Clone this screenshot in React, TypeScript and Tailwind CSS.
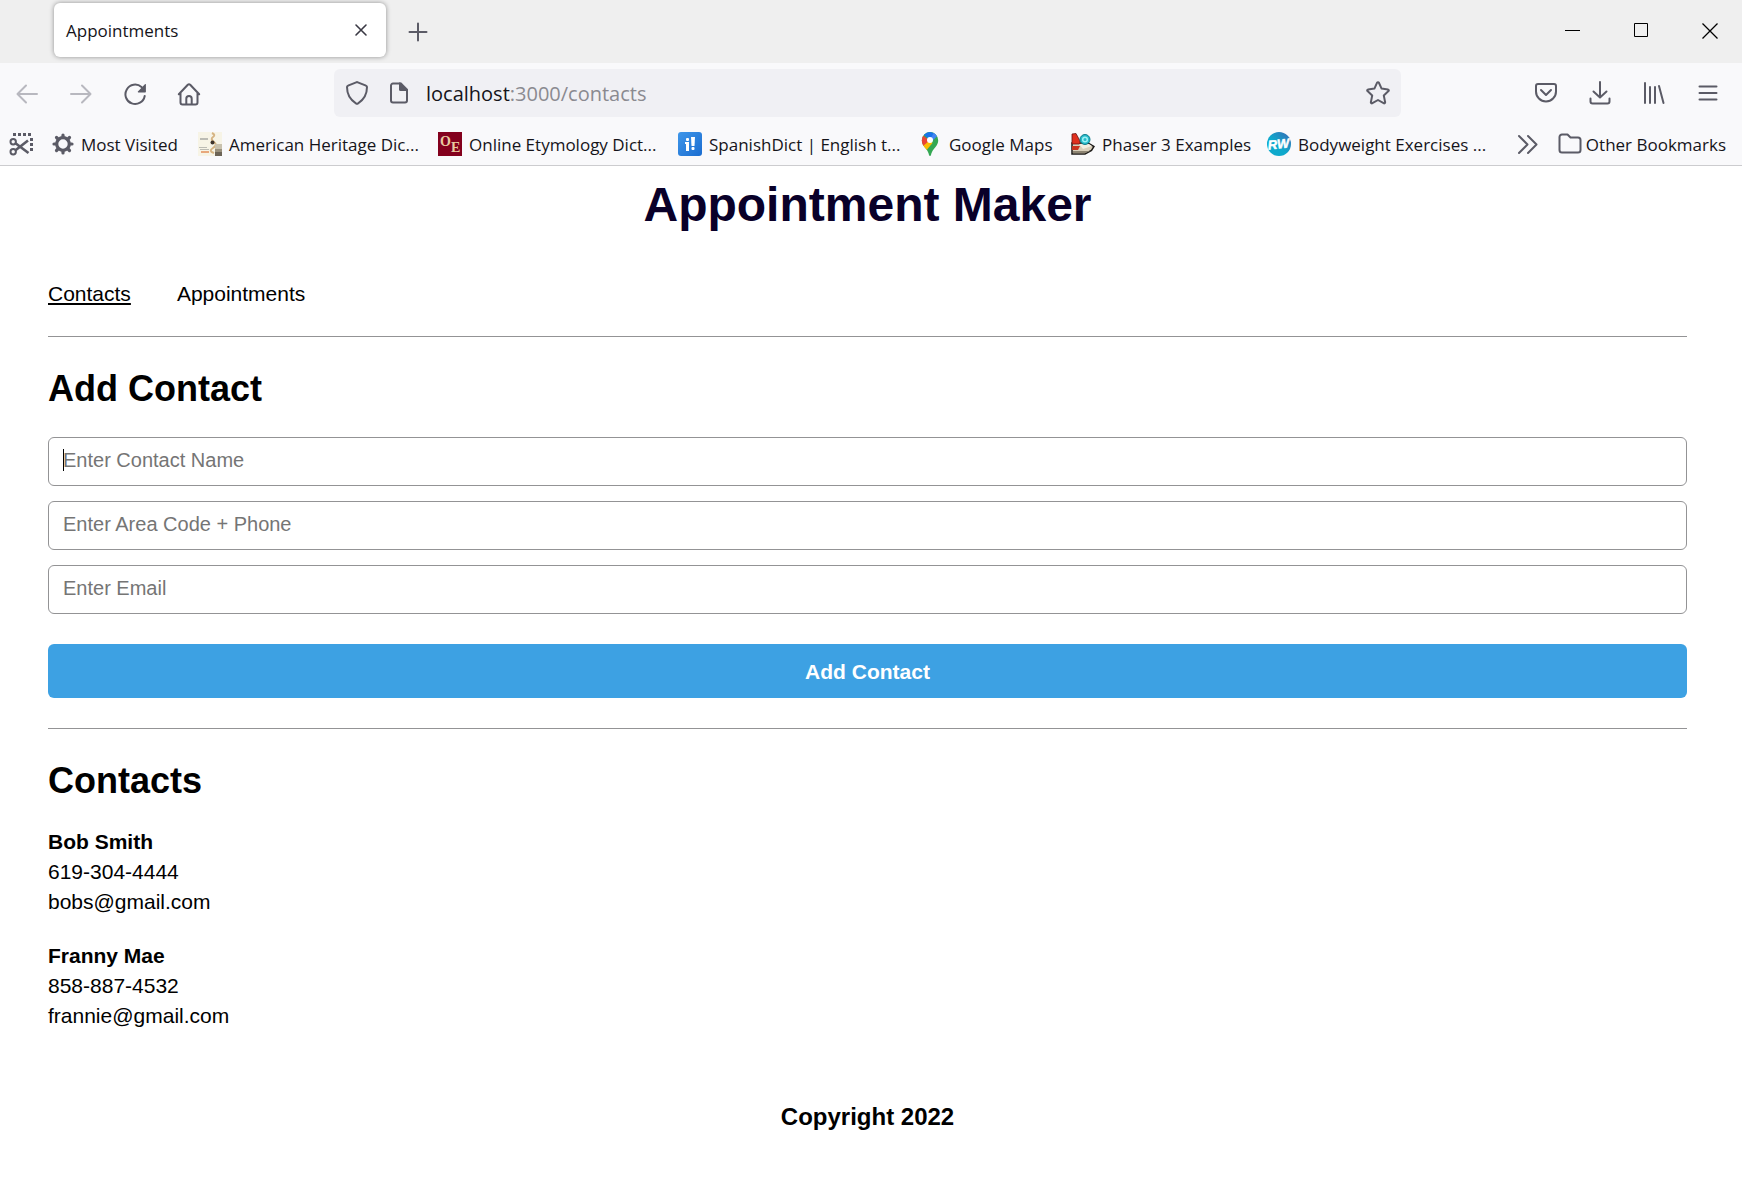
import React, { useState } from 'react';

type P = { className?: string };

const line = {
  fill: 'none',
  stroke: 'currentColor',
  strokeWidth: 2,
  strokeLinecap: 'round' as const,
  strokeLinejoin: 'round' as const,
};

const Svg = ({ size = 24, className = '', children }: P & { size?: number; children: React.ReactNode }) => (
  <svg width={size} height={size} viewBox={`0 0 ${size} ${size}`} className={`shrink-0 ${className}`} aria-hidden="true">
    {children}
  </svg>
);

const BackIcon = () => (
  <Svg><path {...line} d="M22 12H3M11 3.500L2.500 12l8.500 8.500" /></Svg>
);
const ForwardIcon = () => (
  <Svg><path {...line} d="M2 12h19M13 3.500l8.500 8.500-8.500 8.500" /></Svg>
);
const ReloadIcon = () => (
  <Svg>
    <path {...line} strokeWidth={2} d="M18.500 5A9.700 9.700 0 1 0 21.700 14" />
    <path fill="currentColor" d="M21.900 2.200a.6.6 0 0 1 1 .5v7a.8.8 0 0 1-.8.800h-6.800a.6.6 0 0 1-.4-1z" />
  </Svg>
);
const HomeIcon = () => (
  <Svg>
    <path {...line} d="M1.800 12.300L10.800 2.800a1.700 1.700 0 0 1 2.400 0L22.200 12.300M3.500 11v9.500a2 2 0 0 0 2 2h13a2 2 0 0 0 2-2V11" />
    <path {...line} d="M9.300 22v-5.300a2.700 2.700 0 0 1 5.400 0V22" />
  </Svg>
);
const ShieldIcon = () => (
  <Svg><path {...line} d="M11.200 1.300a2 2 0 0 1 1.600 0L21 4.700a1.500 1.500 0 0 1 1 1.400c0 7-2.800 12.500-8.900 16.200a2 2 0 0 1-2.200 0C4.800 18.600 2 13.100 2 6.100a1.500 1.500 0 0 1 1-1.400z" /></Svg>
);
const PageIcon = () => (
  <Svg>
    <path {...line} d="M13 2.500H6a2 2 0 0 0-2 2v15a2 2 0 0 0 2 2h12a2 2 0 0 0 2-2V9" />
    <path fill="currentColor" d="M12 1.500h2.300L21 8.200V10h-7.500A1.500 1.500 0 0 1 12 8.500z" />
  </Svg>
);
const StarIcon = () => (
  <Svg><path {...line} d="M11.100 1.700a1 1 0 0 1 1.800 0l2.700 5.900 6.300.8a1 1 0 0 1 .6 1.700l-4.700 4.400 1.300 6.600a1 1 0 0 1-1.500 1.100L12 19l-5.600 3.200a1 1 0 0 1-1.500-1.100l1.300-6.600-4.700-4.400a1 1 0 0 1 .6-1.700l6.300-.8z" /></Svg>
);
const PocketIcon = () => (
  <Svg>
    <path {...line} d="M4 3h16a2 2 0 0 1 2 2v5.500a10 10 0 0 1-20 0V5a2 2 0 0 1 2-2z" />
    <path {...line} d="M7 9l5 5 5-5" />
  </Svg>
);
const DownloadIcon = () => (
  <Svg><path {...line} d="M12 1v15M5.500 10.500L12 16.500l6.500-6M2.500 17.500v3a2 2 0 0 0 2 2h15a2 2 0 0 0 2-2v-3" /></Svg>
);
const LibraryIcon = () => (
  <Svg><path {...line} d="M3 2v20M8 6v16M13 6v16M17 5l4.500 17" /></Svg>
);
const MenuIcon = () => (
  <Svg><path {...line} d="M3.500 5.500h17M3.500 12h17M3.500 18.500h17" /></Svg>
);

const SnipIcon = () => (
  <Svg>
    <path fill="none" stroke="currentColor" strokeWidth={3} strokeDasharray="3 2" d="M4 2.500h20M22.500 6v15" />
    <circle cx="4.200" cy="9.800" r="2.700" fill="none" stroke="currentColor" strokeWidth={2} />
    <circle cx="4.200" cy="19.800" r="2.700" fill="none" stroke="currentColor" strokeWidth={2} />
    <path fill="none" stroke="currentColor" strokeWidth={2.600} d="M6.500 11.200L19.500 21M6.500 18.300L19 8.500" />
  </Svg>
);
const GearIcon = () => (
  <Svg size={22}>
    <circle cx="11" cy="11" r="6.300" fill="none" stroke="currentColor" strokeWidth={3.200} />
    <path
      fill="none"
      stroke="currentColor"
      strokeWidth={3.200}
      strokeLinecap="round"
      d="M11 4V2M11 20v-2M4 11H2M20 11h-2M6 6L4.500 4.500M17.500 17.500L16 16M6 16l-1.500 1.500M17.500 4.500L16 6"
    />
  </Svg>
);
const HeritageIcon = () => (
  <Svg>
    <rect width="24" height="24" fill="#f7f4e6" />
    <path fill="#bcbcb4" d="M2 6h8v2H2zM1 15h8v1H1zM2 17h9v1H2z" />
    <path fill="#e8a87c" d="M3 19h8v2H3z" />
    <path fill="none" stroke="#d6b483" strokeWidth={2} d="M14 1q4 2 1 4t1 5-1 6 1 5" />
    <circle cx="14.500" cy="10.500" r="2" fill="#3d342c" />
    <rect x="17" y="12" width="7" height="5" fill="#c9c2ae" />
    <rect x="17" y="17" width="7" height="3" fill="#9a917d" />
    <rect x="17" y="20" width="7" height="4" fill="#6c6456" />
  </Svg>
);
const EtymologyIcon = () => (
  <Svg>
    <rect width="24" height="24" fill="#83001d" />
    <text x="2" y="14" fontSize="14" fontWeight="bold" fill="#e9c9a0" fontFamily="Liberation Serif, serif">
      O<tspan dy="6">E</tspan>
    </text>
  </Svg>
);
const SpanishIcon = () => (
  <Svg>
    <defs>
      <linearGradient id="sd" x1="0" y1="0" x2="1" y2="1">
        <stop offset="0" stopColor="#3f97ea" />
        <stop offset="1" stopColor="#1a6cd0" />
      </linearGradient>
    </defs>
    <rect width="24" height="24" rx="3" fill="url(#sd)" />
    <g fill="#fff">
      <rect x="8" y="6" width="3" height="3" rx="1" />
      <path d="M7 10h4v9H8v-7H7z" />
      <path d="M13 5h4l-.5 9h-3z" />
      <rect x="13.500" y="15" width="3" height="3" rx="1" />
    </g>
  </Svg>
);
const MapsIcon = () => (
  <Svg>
    <clipPath id="pin"><path d="M12 0a8.200 8.200 0 0 1 8.200 8.200c0 4-2.200 6-4.500 9-1.700 2.300-2.200 3.800-2.700 5.800-.3 1.300-1.700 1.300-2 0-.5-2-1-3.500-2.700-5.800-2.300-3-4.500-5-4.500-9A8.200 8.200 0 0 1 12 0z" /></clipPath>
    <g clipPath="url(#pin)">
      <rect width="24" height="24" fill="#34a853" />
      <path fill="#fbbc04" d="M2 14l8.500-7 4 4L7 20H2z" />
      <path fill="#ea4335" d="M3 2l8.500 6.500L5 14H2z" />
      <path fill="#1a73e8" d="M5.500 2.500L12 8.200 17 2l-5-3z" />
      <path fill="#4285f4" d="M12 8.200l2 1L19.500 3.700 16 0z" />
    </g>
    <circle cx="12" cy="8" r="3" fill="#fff" />
  </Svg>
);
const PhaserIcon = () => (
  <Svg>
    <path fill="#d9cfbb" stroke="#1c1a18" strokeWidth={1.500} d="M1 22V11h16l6 3.500-2.500 4L14 22z" />
    <path fill="#8d8472" d="M2 19h17l-5 2.200H2z" />
    <path fill="#e0301e" stroke="#611" strokeWidth={.8} d="M1 2l4-.5L9 9v3H1z" />
    <path fill="#c8321f" d="M1 14h8l-2 4H1z" />
    <path fill="#f3ede0" d="M8 12h10l3 2-9 3z" />
    <circle cx="14" cy="7.500" r="5" fill="#27bccb" stroke="#127c8b" />
    <circle cx="14" cy="7.500" r="2.300" fill="none" stroke="#9df1f5" strokeWidth={1.500} />
  </Svg>
);
const BodyIcon = () => (
  <Svg>
    <defs>
      <linearGradient id="rw" x1="0" y1="1" x2="1" y2="0">
        <stop offset="0.450" stopColor="#0ea9cc" />
        <stop offset="1" stopColor="#3a68b4" />
      </linearGradient>
    </defs>
    <circle cx="12" cy="12" r="12" fill="url(#rw)" />
    <text x="11.500" y="16.500" textAnchor="middle" fontSize="13" fontWeight="bold" fontStyle="italic" fill="#fff" stroke="#fff" strokeWidth=".5" fontFamily="Liberation Sans, sans-serif" transform="rotate(-6 12 12)">RW</text>
  </Svg>
);
const ChevronsIcon = () => (
  <Svg><path {...line} d="M3 4l8.500 8.500L3 21M12 4l8.500 8.500L12 21" /></Svg>
);
const FolderIcon = () => (
  <Svg><path {...line} d="M4 2.500h5.500L12.500 5.500H20a2.500 2.500 0 0 1 2.500 2.500v10a2.500 2.500 0 0 1-2.500 2.500H4A2.500 2.500 0 0 1 1.500 18V5A2.500 2.500 0 0 1 4 2.500z" /></Svg>
);

const bookmarks = [
  { label: 'Most Visited', icon: <GearIcon />, width: 'w-[146px]' },
  { label: 'American Heritage Dic...', icon: <HeritageIcon />, width: 'w-[240px]' },
  { label: 'Online Etymology Dict...', icon: <EtymologyIcon />, width: 'w-[240px]' },
  { label: 'SpanishDict | English t...', icon: <SpanishIcon />, width: 'w-[240px]' },
  { label: 'Google Maps', icon: <MapsIcon />, width: 'w-[153px]' },
  { label: 'Phaser 3 Examples', icon: <PhaserIcon />, width: 'w-[196px]' },
  { label: 'Bodyweight Exercises ...', icon: <BodyIcon />, width: 'w-[240px]' },
];

const contacts = [
  { name: 'Bob Smith', phone: '619-304-4444', email: 'bobs@gmail.com' },
  { name: 'Franny Mae', phone: '858-887-4532', email: 'frannie@gmail.com' },
];

const fields = [
  { label: 'Enter Contact Name', type: 'text', focus: true },
  { label: 'Enter Area Code + Phone', type: 'tel', focus: false },
  { label: 'Enter Email', type: 'email', focus: false },
];

function Field({ label, type, focus }: (typeof fields)[number]) {
  const [value, setValue] = useState('');
  return (
    <div className="relative flex">
      <input
        type={type}
        aria-label={label}
        placeholder={label}
        value={value}
        onChange={(e) => setValue(e.target.value)}
        autoFocus={focus}
        className={`h-[49px] w-full rounded-md border border-[#939395] px-3.5 pb-0.5 text-xl outline-none placeholder:text-[#757575] ${focus && value === '' ? 'caret-transparent' : 'caret-black'}`}
      />
      {focus && value === '' && <span className="pointer-events-none absolute top-3 left-[15px] h-[22px] w-px bg-black" />}
    </div>
  );
}

function Browser() {
  return (
    <div className="border-b border-[#cccccf] bg-[#f9f9fb] font-['Open_Sans',sans-serif] text-[17px] text-[#15141a]">
      <div className="flex h-[63px] items-center bg-[#efefef] pl-[54px]">
        <div className="mb-[3px] flex h-[54px] w-[332px] items-center justify-between rounded-md bg-white pr-4 pl-3 shadow-[0_0_5px_rgba(0,0,0,0.4)]">
          <span className="pt-0.5">Appointments</span>
          <button aria-label="Close tab" className="text-[#3a3944]">
            <Svg size={18}><path {...line} strokeWidth={1.600} d="M4 4l10 10M14 4L4 14" /></Svg>
          </button>
        </div>
        <button aria-label="New tab" className="ml-[22px] text-[#5b5b66]">
          <Svg size={20}><path {...line} d="M10 1.500v17M1.500 10h17" /></Svg>
        </button>
        <div className="ml-auto flex h-full items-center pb-0.5 text-black">
          <button aria-label="Minimize" className="flex h-full w-[67px] items-center justify-center"><Svg size={16}><path fill="currentColor" d="M0 7h15v1H0z" /></Svg></button>
          <button aria-label="Maximize" className="flex h-full w-[71px] items-center justify-center"><Svg size={16}><path fill="none" stroke="currentColor" d="M.5 .5h13v13h-13z" /></Svg></button>
          <button aria-label="Close window" className="flex h-full w-[65px] items-center justify-center"><Svg size={16}><path fill="none" stroke="currentColor" strokeWidth={1.300} d="M.5 .5l15 15M15.500 .5L.5 15.500" /></Svg></button>
        </div>
      </div>

      <div className="flex h-[60px] items-center pr-[22px] pl-[15px] text-[#5b5b66]">
        <div className="flex w-[319px] items-center gap-[30px] pt-0.5">
          <button aria-label="Back" className="text-[#b8b8bf]" disabled><BackIcon /></button>
          <button aria-label="Forward" className="text-[#b8b8bf]" disabled><ForwardIcon /></button>
          <button aria-label="Reload"><ReloadIcon /></button>
          <button aria-label="Home"><HomeIcon /></button>
        </div>
        <div className="flex h-12 w-[1067px] items-center rounded-md bg-[#f0f0f4] px-[11px]">
          <ShieldIcon />
          <span className="mr-[15px] ml-[18px]"><PageIcon /></span>
          <div className="flex-1 pt-0.5 text-xl text-[#8a8a90]"><span className="text-[#15141a]">localhost</span>:3000/contacts</div>
          <button aria-label="Bookmark this page"><StarIcon /></button>
        </div>
        <div className="ml-auto flex items-center gap-[30px]">
          <button aria-label="Save to Pocket"><PocketIcon /></button>
          <button aria-label="Downloads"><DownloadIcon /></button>
          <button aria-label="Library"><LibraryIcon /></button>
          <button aria-label="Open menu"><MenuIcon /></button>
        </div>
      </div>

      <nav aria-label="Bookmarks" className="flex h-[42px] items-center pr-4 pl-[9px]">
        <button aria-label="Screenshot" className="mr-[19px] text-[#5b5b66]"><SnipIcon /></button>
        {bookmarks.map((b) => (
          <a key={b.label} href="#" className={`flex shrink-0 items-center gap-[7px] whitespace-nowrap ${b.width}`}>
            <span className="text-[#5b5b66]">{b.icon}</span>
            <span className="pt-0.5">{b.label}</span>
          </a>
        ))}
        <button aria-label="More bookmarks" className="mr-[18px] ml-auto text-[#5b5b66]"><ChevronsIcon /></button>
        <a href="#" className="flex items-center gap-1 whitespace-nowrap">
          <span className="text-[#5b5b66]"><FolderIcon /></span>
          <span className="pt-0.5">Other Bookmarks</span>
        </a>
      </nav>
    </div>
  );
}

const Divider = ({ className = '' }: P) => <hr className={`h-px border-0 bg-[#939395] ${className}`} />;

export default function App() {
  return (
    <div className="min-h-screen bg-white">
      <Browser />
      <div className="pr-[55px] pl-12 font-['Liberation_Sans',Arial,sans-serif] text-[21px] leading-[30px] text-black">
        <h1 className="pt-3 text-center text-5xl leading-[54px] font-bold text-[#090029]">Appointment Maker</h1>

        <nav className="mt-[47px] flex gap-[46px]">
          <a href="#" className="underline decoration-2 underline-offset-2">Contacts</a>
          <a href="#">Appointments</a>
        </nav>
        <Divider className="mt-[27px]" />

        <section>
          <h2 className="mt-[31px] text-4xl leading-[42px] font-bold">Add Contact</h2>
          <form className="mt-[27px] flex flex-col gap-[15px]" onSubmit={(e) => e.preventDefault()}>
            {fields.map((f) => (
              <Field key={f.label} {...f} />
            ))}
            <button type="submit" className="mt-[15px] h-[54px] rounded-md bg-[#3da1e3] pt-0.5 font-bold text-white">Add Contact</button>
          </form>
        </section>
        <Divider className="mt-[30px]" />

        <section>
          <h2 className="mt-[31px] text-4xl leading-[42px] font-bold">Contacts</h2>
          <div className="mt-[25px] flex flex-col gap-6">
            {contacts.map((c) => (
              <div key={c.name}>
                <p className="font-bold">{c.name}</p>
                <p>{c.phone}</p>
                <p>{c.email}</p>
              </div>
            ))}
          </div>
        </section>

        <footer className="mt-[70px] text-center text-2xl font-bold">Copyright 2022</footer>
      </div>
    </div>
  );
}
